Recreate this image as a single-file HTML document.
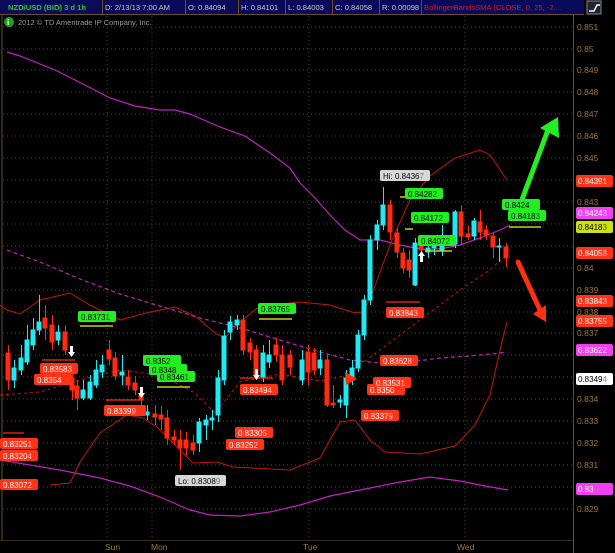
<!DOCTYPE html>
<html><head><meta charset="utf-8"><style>
html,body{margin:0;padding:0;background:#000;width:615px;height:553px;overflow:hidden}
svg{display:block}
text{font-family:"Liberation Sans",sans-serif}
</style></head><body>
<svg width="615" height="553" viewBox="0 0 615 553" xmlns="http://www.w3.org/2000/svg">
<rect width="615" height="553" fill="#000"/>
<g stroke="#5a4418" stroke-width="1" stroke-dasharray="1,3">
<line x1="3" y1="27" x2="573" y2="27"/><line x1="3" y1="49" x2="573" y2="49"/><line x1="3" y1="70" x2="573" y2="70"/><line x1="3" y1="92" x2="573" y2="92"/><line x1="3" y1="114" x2="573" y2="114"/><line x1="3" y1="136" x2="573" y2="136"/><line x1="3" y1="158" x2="573" y2="158"/><line x1="3" y1="180" x2="573" y2="180"/><line x1="3" y1="202" x2="573" y2="202"/><line x1="3" y1="224" x2="573" y2="224"/><line x1="3" y1="246" x2="573" y2="246"/><line x1="3" y1="268" x2="573" y2="268"/><line x1="3" y1="290" x2="573" y2="290"/><line x1="3" y1="312" x2="573" y2="312"/><line x1="3" y1="333" x2="573" y2="333"/><line x1="3" y1="355" x2="573" y2="355"/><line x1="3" y1="377" x2="573" y2="377"/><line x1="3" y1="399" x2="573" y2="399"/><line x1="3" y1="421" x2="573" y2="421"/><line x1="3" y1="443" x2="573" y2="443"/><line x1="3" y1="465" x2="573" y2="465"/><line x1="3" y1="487" x2="573" y2="487"/><line x1="3" y1="509" x2="573" y2="509"/>
<line x1="107" y1="16" x2="107" y2="540"/><line x1="152" y1="16" x2="152" y2="540"/><line x1="309" y1="16" x2="309" y2="540"/><line x1="465" y1="16" x2="465" y2="540"/>
</g>
<line x1="2" y1="15" x2="2" y2="540" stroke="#6a5020"/>
<line x1="573.5" y1="15" x2="573.5" y2="553" stroke="#6a5020"/>
<line x1="0" y1="540.5" x2="573" y2="540.5" stroke="#3a2c10"/>
<rect x="0" y="0" width="584" height="14" fill="#0a0a5a"/>
<g stroke="#6a5020"><line x1="102.5" y1="0" x2="102.5" y2="14"/><line x1="185.5" y1="0" x2="185.5" y2="14"/><line x1="238.5" y1="0" x2="238.5" y2="14"/><line x1="285.5" y1="0" x2="285.5" y2="14"/><line x1="332.5" y1="0" x2="332.5" y2="14"/><line x1="379.5" y1="0" x2="379.5" y2="14"/><line x1="421.5" y1="0" x2="421.5" y2="14"/><line x1="0" y1="14.5" x2="584" y2="14.5"/></g>
<g font-size="7.6" fill="#c8c8c8">
<text x="8" y="10" fill="#22cc22" font-weight="bold">NZD/USD (BID) 3 d 1h</text>
<text x="105" y="10">D: 2/13/13 7:00 AM</text>
<text x="188" y="10">O: 0.84094</text>
<text x="241" y="10">H: 0.84101</text>
<text x="288" y="10">L: 0.84003</text>
<text x="335" y="10">C: 0.84058</text>
<text x="382" y="10">R: 0.00098</text>
<text x="424" y="10" fill="#e01818">BollingerBandsSMA (CLOSE, 0, 25, -2....</text>
</g>
<rect x="587" y="1" width="14" height="13" fill="#223" stroke="#889"/>
<path d="M589 11 L594 11 L597 5 L600 5" stroke="#fff" fill="none" stroke-width="1.5"/>
<circle cx="9" cy="22" r="5" fill="#1fa01f"/><text x="7" y="25" font-size="8" fill="#fff" font-weight="bold">i</text>
<text x="18" y="25" font-size="7.5" fill="#9a9a9a">2012 © TD Ameritrade IP Company, Inc.</text>
<g font-size="8.5" fill="#a07830">
<text x="577" y="30">0.851</text><text x="577" y="52">0.85</text><text x="577" y="73">0.849</text><text x="577" y="95">0.848</text><text x="577" y="117">0.847</text><text x="577" y="139">0.846</text><text x="577" y="161">0.845</text><text x="577" y="205">0.843</text><text x="577" y="271">0.84</text><text x="577" y="293">0.839</text><text x="577" y="315">0.838</text><text x="577" y="336">0.837</text><text x="577" y="402">0.834</text><text x="577" y="424">0.833</text><text x="577" y="446">0.832</text><text x="577" y="468">0.831</text><text x="577" y="512">0.829</text>
<text x="105" y="550">Sun</text><text x="151" y="550">Mon</text><text x="303" y="550">Tue</text><text x="457" y="550">Wed</text>
</g>
<polyline fill="none" stroke="#c020c0" stroke-width="1.2" points="7,52 20,56 55,70 85,85 110,98 135,106 160,110 175,110 190,114 220,127 245,136 270,153 290,168 300,183 315,198 330,215 345,230 360,240 380,240 400,245 415,248 430,250 445,248 460,245 480,238 500,230 510,225"/>
<polyline fill="none" stroke="#c020c0" stroke-width="1.2" points="0,460 30,465 60,470 100,478 130,486 160,497 190,510 210,515 240,516 270,512 300,505 330,496 360,490 400,482 430,477 460,481 485,486 508,490"/>
<polyline fill="none" stroke="#c020c0" stroke-width="1.2" stroke-dasharray="4,3" points="7,250 40,262 80,279 120,294 160,306 200,318 240,328 280,340 320,352 350,360 380,363 410,362 440,358 470,356 500,353 507,352"/>
<polyline fill="none" stroke="#c01808" stroke-width="1" points="0,305 7,310 20,314 40,300 70,293 90,305 120,320 150,312 175,307 195,316 215,333 225,338 240,322 260,306 300,302 330,305 355,313 362,312 370,300 380,272 392,240 410,200 430,176 455,158 480,150 490,155 507,180"/>
<polyline fill="none" stroke="#c01808" stroke-width="1" points="50,485 70,483 80,462 100,433 127,415 143,418 157,427 173,443 193,463 217,462 233,467 290,470 320,458 340,422 355,420 370,440 385,452 420,454 455,446 475,425 490,395 500,350 507,322"/>
<polyline fill="none" stroke="#c01808" stroke-width="1" stroke-dasharray="3,3" points="0,395 40,392 80,380 120,370 160,375 195,393 215,413 240,382 280,374 320,381 345,376 380,350 420,320 460,290 490,270 507,254"/>
<g>
<g fill="#ff2a10" stroke="#ff2a10">
<line x1="8.5" y1="345" x2="8.5" y2="390"/><rect x="6" y="353" width="4" height="27"/>
<line x1="45.5" y1="305" x2="45.5" y2="340"/><rect x="43" y="318" width="4" height="10"/>
<line x1="52.5" y1="315" x2="52.5" y2="350"/><rect x="50" y="325" width="4" height="17"/>
<line x1="65.5" y1="325" x2="65.5" y2="355"/><rect x="63" y="332" width="4" height="18"/>
<line x1="72.5" y1="370" x2="72.5" y2="400"/><rect x="70" y="378" width="4" height="12"/>
<line x1="77.5" y1="380" x2="77.5" y2="410"/><rect x="75" y="386" width="4" height="12"/>
<line x1="109.5" y1="340" x2="109.5" y2="365"/><rect x="107" y="350" width="4" height="9"/>
<line x1="115.5" y1="352" x2="115.5" y2="380"/><rect x="113" y="358" width="4" height="18"/>
<line x1="128.5" y1="370" x2="128.5" y2="390"/><rect x="126" y="377" width="4" height="8"/>
<line x1="135.5" y1="376" x2="135.5" y2="395"/><rect x="133" y="383" width="4" height="7"/>
<line x1="141.5" y1="390" x2="141.5" y2="405"/><rect x="139" y="395" width="4" height="5"/>
<line x1="155.5" y1="405" x2="155.5" y2="425"/><rect x="153" y="414" width="4" height="3"/>
<line x1="161.5" y1="406" x2="161.5" y2="430"/><rect x="159" y="415" width="4" height="4"/>
<line x1="167.5" y1="410" x2="167.5" y2="445"/><rect x="165" y="418" width="4" height="20"/>
<line x1="174.5" y1="430" x2="174.5" y2="445"/><rect x="172" y="437" width="4" height="3"/>
<line x1="180.5" y1="430" x2="180.5" y2="470"/><rect x="178" y="440" width="4" height="8"/>
<line x1="186.5" y1="432" x2="186.5" y2="455"/><rect x="184" y="440" width="4" height="8"/>
<line x1="193.5" y1="435" x2="193.5" y2="455"/><rect x="191" y="443" width="4" height="7"/>
<line x1="243.5" y1="315" x2="243.5" y2="355"/><rect x="241" y="320" width="4" height="30"/>
<line x1="250.5" y1="338" x2="250.5" y2="360"/><rect x="248" y="343" width="4" height="9"/>
<line x1="256.5" y1="345" x2="256.5" y2="380"/><rect x="254" y="350" width="4" height="25"/>
<line x1="276.5" y1="338" x2="276.5" y2="362"/><rect x="274" y="345" width="4" height="10"/>
<line x1="282.5" y1="345" x2="282.5" y2="385"/><rect x="280" y="355" width="4" height="25"/>
<line x1="290.5" y1="350" x2="290.5" y2="375"/><rect x="288" y="355" width="4" height="12"/>
<line x1="308.5" y1="345" x2="308.5" y2="385"/><rect x="306" y="352" width="4" height="20"/>
<line x1="314.5" y1="348" x2="314.5" y2="375"/><rect x="312" y="353" width="4" height="17"/>
<line x1="327.5" y1="355" x2="327.5" y2="407"/><rect x="325" y="360" width="4" height="45"/>
<line x1="333.5" y1="385" x2="333.5" y2="408"/><rect x="331" y="403" width="4" height="2"/>
<line x1="390.5" y1="200" x2="390.5" y2="240"/><rect x="388" y="205" width="4" height="27"/>
<line x1="397.5" y1="228" x2="397.5" y2="258"/><rect x="395" y="233" width="4" height="19"/>
<line x1="403.5" y1="248" x2="403.5" y2="273"/><rect x="401" y="253" width="4" height="15"/>
<line x1="409.5" y1="250" x2="409.5" y2="278"/><rect x="407" y="260" width="4" height="10"/>
<line x1="421.5" y1="240" x2="421.5" y2="255"/><rect x="419" y="245" width="4" height="5"/>
<line x1="461.5" y1="205" x2="461.5" y2="245"/><rect x="459" y="212" width="4" height="24"/>
<line x1="468.5" y1="225" x2="468.5" y2="240"/><rect x="466" y="234" width="4" height="3"/>
<line x1="480.5" y1="210" x2="480.5" y2="240"/><rect x="478" y="222" width="4" height="10"/>
<line x1="486.5" y1="225" x2="486.5" y2="240"/><rect x="484" y="230" width="4" height="5"/>
<line x1="493.5" y1="232" x2="493.5" y2="258"/><rect x="491" y="236" width="4" height="11"/>
<line x1="506.5" y1="243" x2="506.5" y2="267"/><rect x="504" y="247" width="4" height="11"/>
</g>
<g fill="#22e8f0" stroke="#22e8f0">
<line x1="14.5" y1="360" x2="14.5" y2="388"/><rect x="12" y="368" width="4" height="12"/>
<line x1="21.5" y1="345" x2="21.5" y2="375"/><rect x="19" y="358" width="4" height="12"/>
<line x1="27.5" y1="325" x2="27.5" y2="365"/><rect x="25" y="340" width="4" height="22"/>
<line x1="33.5" y1="318" x2="33.5" y2="350"/><rect x="31" y="330" width="4" height="15"/>
<line x1="39.5" y1="295" x2="39.5" y2="335"/><rect x="37" y="322" width="4" height="8"/>
<line x1="58.5" y1="325" x2="58.5" y2="345"/><rect x="56" y="332" width="4" height="8"/>
<line x1="83.5" y1="380" x2="83.5" y2="400"/><rect x="81" y="390" width="4" height="8"/>
<line x1="90.5" y1="375" x2="90.5" y2="400"/><rect x="88" y="382" width="4" height="16"/>
<line x1="96.5" y1="360" x2="96.5" y2="388"/><rect x="94" y="370" width="4" height="15"/>
<line x1="102.5" y1="355" x2="102.5" y2="378"/><rect x="100" y="365" width="4" height="7"/>
<line x1="122.5" y1="355" x2="122.5" y2="385"/><rect x="120" y="372" width="4" height="3"/>
<line x1="147.5" y1="405" x2="147.5" y2="420"/><rect x="145" y="412" width="4" height="3"/>
<line x1="199.5" y1="418" x2="199.5" y2="452"/><rect x="197" y="422" width="4" height="21"/>
<line x1="206.5" y1="415" x2="206.5" y2="440"/><rect x="204" y="420" width="4" height="5"/>
<line x1="212.5" y1="410" x2="212.5" y2="430"/><rect x="210" y="418" width="4" height="2"/>
<line x1="218.5" y1="370" x2="218.5" y2="422"/><rect x="216" y="378" width="4" height="37"/>
<line x1="224.5" y1="330" x2="224.5" y2="385"/><rect x="222" y="336" width="4" height="44"/>
<line x1="230.5" y1="316" x2="230.5" y2="340"/><rect x="228" y="322" width="4" height="10"/>
<line x1="237.5" y1="315" x2="237.5" y2="330"/><rect x="235" y="320" width="4" height="5"/>
<line x1="263.5" y1="345" x2="263.5" y2="382"/><rect x="261" y="353" width="4" height="25"/>
<line x1="269.5" y1="340" x2="269.5" y2="368"/><rect x="267" y="355" width="4" height="7"/>
<line x1="302.5" y1="350" x2="302.5" y2="385"/><rect x="300" y="360" width="4" height="20"/>
<line x1="320.5" y1="350" x2="320.5" y2="375"/><rect x="318" y="360" width="4" height="8"/>
<line x1="340.5" y1="395" x2="340.5" y2="408"/><rect x="338" y="400" width="4" height="2"/>
<line x1="346.5" y1="370" x2="346.5" y2="418"/><rect x="344" y="378" width="4" height="27"/>
<line x1="352.5" y1="360" x2="352.5" y2="385"/><rect x="350" y="368" width="4" height="10"/>
<line x1="358.5" y1="330" x2="358.5" y2="372"/><rect x="356" y="335" width="4" height="33"/>
<line x1="364.5" y1="295" x2="364.5" y2="340"/><rect x="362" y="300" width="4" height="35"/>
<line x1="370.5" y1="235" x2="370.5" y2="305"/><rect x="368" y="240" width="4" height="60"/>
<line x1="377.5" y1="220" x2="377.5" y2="250"/><rect x="375" y="225" width="4" height="15"/>
<line x1="383.5" y1="187" x2="383.5" y2="230"/><rect x="381" y="205" width="4" height="20"/>
<line x1="415.5" y1="238" x2="415.5" y2="286"/><rect x="413" y="243" width="4" height="42"/>
<line x1="428.5" y1="244" x2="428.5" y2="258"/><rect x="426" y="248" width="4" height="4"/>
<line x1="434.5" y1="240" x2="434.5" y2="255"/><rect x="432" y="245" width="4" height="3"/>
<line x1="442.5" y1="225" x2="442.5" y2="256"/><rect x="440" y="245" width="4" height="5"/>
<line x1="455.5" y1="210" x2="455.5" y2="248"/><rect x="453" y="212" width="4" height="32"/>
<line x1="474.5" y1="218" x2="474.5" y2="240"/><rect x="472" y="221" width="4" height="15"/>
<line x1="499.5" y1="238" x2="499.5" y2="262"/><rect x="497" y="246" width="4" height="1"/>
</g>
</g>
<g stroke="#c8d010" stroke-width="1.5">
<line x1="80" y1="326" x2="113" y2="326"/><line x1="259" y1="319" x2="292" y2="319"/><line x1="157" y1="387" x2="190" y2="387"/><line x1="400" y1="197" x2="408" y2="197"/><line x1="405" y1="229" x2="413" y2="229"/><line x1="425" y1="251" x2="452" y2="251"/><line x1="509" y1="227" x2="541" y2="227"/>
</g>
<g stroke="#ff2a10" stroke-width="1.2">
<line x1="42" y1="360" x2="75" y2="360"/><line x1="106" y1="400" x2="143" y2="400"/><line x1="240" y1="378" x2="273" y2="378"/><line x1="386" y1="302" x2="420" y2="302"/><line x1="3" y1="433" x2="24" y2="433"/>
</g>
<path d="M520 205 L548 130" stroke="#22ee22" stroke-width="5" fill="none" stroke-linecap="round"/>
<polygon points="540,128 558,117 559,138" fill="#22ee22"/>
<path d="M518 262 L540 310" stroke="#ff3010" stroke-width="5" fill="none" stroke-linecap="round"/>
<polygon points="533,314 546,322 546,305" fill="#ff3010"/>
<polygon points="345,372 357,379 346,385" fill="#ff3010"/>
<g fill="#fff">
<path d="M70 346 h3 v6 h2 l-3.5 5 l-3.5 -5 h2z"/>
<path d="M140 387 h3 v6 h2 l-3.5 5 l-3.5 -5 h2z"/>
<path d="M255 369 h3 v6 h2 l-3.5 5 l-3.5 -5 h2z"/>
<path d="M420 262 h3 v-6 h2 l-3.5 -5 l-3.5 5 h2z"/>
</g>
<g font-size="8">
<g fill="#22ee22"><rect x="78" y="311" width="38" height="11" rx="2"/><rect x="258" y="303" width="38" height="11" rx="2"/><rect x="143" y="355" width="38" height="11" rx="2"/><rect x="149" y="364" width="38" height="11" rx="2"/><rect x="157" y="371" width="38" height="11" rx="2"/><rect x="405" y="188" width="38" height="11" rx="2"/><rect x="411" y="212" width="38" height="11" rx="2"/><rect x="418" y="235" width="38" height="11" rx="2"/><rect x="502" y="199" width="38" height="11" rx="2"/><rect x="508" y="210" width="38" height="11" rx="2"/></g>
<g fill="#000"><text x="81" y="320">0.8373<tspan fill="#060">1</tspan></text><text x="261" y="312">0.8376<tspan fill="#060">5</tspan></text><text x="146" y="364">0.8352</text><text x="152" y="373">0.8348</text><text x="160" y="380">0.8346<tspan fill="#060">1</tspan></text><text x="408" y="197">0.8428<tspan fill="#060">2</tspan></text><text x="414" y="221">0.8417<tspan fill="#060">2</tspan></text><text x="421" y="244">0.8407<tspan fill="#060">2</tspan></text><text x="505" y="208">0.8424</text><text x="511" y="219">0.8418<tspan fill="#060">3</tspan></text></g>
<g fill="#ff3318"><rect x="40" y="363" width="38" height="11" rx="2"/><rect x="34" y="374" width="38" height="11" rx="2"/><rect x="104" y="405" width="42" height="11" rx="2"/><rect x="240" y="384" width="38" height="11" rx="2"/><rect x="235" y="427" width="38" height="11" rx="2"/><rect x="226" y="439" width="38" height="11" rx="2"/><rect x="0" y="438" width="38" height="11" rx="2"/><rect x="0" y="450" width="38" height="11" rx="2"/><rect x="0" y="479" width="38" height="11" rx="2"/><rect x="386" y="307" width="38" height="11" rx="2"/><rect x="380" y="355" width="38" height="11" rx="2"/><rect x="373" y="377" width="38" height="11" rx="2"/><rect x="367" y="384" width="38" height="11" rx="2"/><rect x="361" y="410" width="38" height="11" rx="2"/>
<rect x="576" y="175" width="37" height="12" rx="2"/><rect x="576" y="247" width="37" height="12" rx="2"/><rect x="576" y="295" width="37" height="12" rx="2"/><rect x="576" y="315" width="37" height="12" rx="2"/></g>
<g fill="#fff"><text x="43" y="372">0.8358<tspan fill="#fbb">3</tspan></text><text x="37" y="383">0.8354</text><text x="107" y="414">0.8339<tspan fill="#fbb">9</tspan></text><text x="243" y="393">0.8349<tspan fill="#fbb">4</tspan></text><text x="238" y="436">0.8330<tspan fill="#fbb">5</tspan></text><text x="229" y="448">0.8325<tspan fill="#fbb">2</tspan></text><text x="3" y="447">0.8325<tspan fill="#fbb">1</tspan></text><text x="3" y="459">0.8320<tspan fill="#fbb">4</tspan></text><text x="3" y="488">0.8307<tspan fill="#fbb">2</tspan></text><text x="389" y="316">0.8384<tspan fill="#fbb">3</tspan></text><text x="383" y="364">0.8362<tspan fill="#fbb">8</tspan></text><text x="376" y="386">0.8353<tspan fill="#fbb">1</tspan></text><text x="370" y="393">0.8350</text><text x="364" y="419">0.8337<tspan fill="#fbb">9</tspan></text>
<text x="578" y="184">0.8439<tspan fill="#fbb">1</tspan></text><text x="578" y="256">0.8405<tspan fill="#fbb">8</tspan></text><text x="578" y="304">0.8384<tspan fill="#fbb">3</tspan></text><text x="578" y="324">0.8375<tspan fill="#fbb">5</tspan></text></g>
<rect x="576" y="207" width="37" height="12" rx="2" fill="#f040f0"/><text x="578" y="216" fill="#fff">0.8424<tspan fill="#fbf">3</tspan></text>
<rect x="576" y="221" width="37" height="12" rx="2" fill="#d0e010"/><text x="578" y="230" fill="#000">0.8418<tspan fill="#660">3</tspan></text>
<rect x="576" y="344" width="37" height="12" rx="2" fill="#f040f0"/><text x="578" y="353" fill="#fff">0.8362<tspan fill="#fbf">2</tspan></text>
<rect x="576" y="373" width="37" height="12" rx="2" fill="#fff"/><text x="578" y="382" fill="#000">0.8349<tspan fill="#888">4</tspan></text>
<rect x="576" y="483" width="37" height="12" rx="2" fill="#f040f0"/><text x="578" y="492" fill="#fff">0.83</text>
<rect x="175" y="475" width="51" height="11" rx="2" fill="#d8d8d8"/><text x="178" y="484" fill="#000">Lo: 0.8308<tspan fill="#777">9</tspan></text>
<rect x="380" y="170" width="50" height="11" rx="2" fill="#d8d8d8"/><text x="383" y="179" fill="#000">Hi: 0.8436<tspan fill="#777">7</tspan></text>
</g>
</svg>
</body></html>
